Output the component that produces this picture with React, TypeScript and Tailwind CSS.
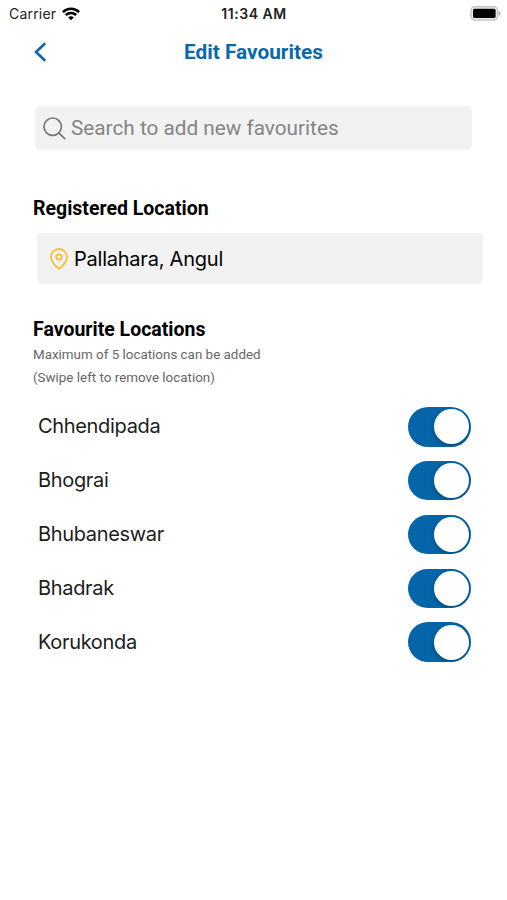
import React, { useState } from "react";

const favourites = ["Chhendipada", "Bhograi", "Bhubaneswar", "Bhadrak", "Korukonda"];

function StatusBar() {
  return (
    <div className="grid h-[27px] grid-cols-[1fr_auto_1fr] items-center pl-[9px] pr-[6px] font-['Inter',sans-serif] text-black">
      <div className="flex items-center gap-[6px]">
        <span className="text-[14px] tracking-[0.2px] text-[#222]">Carrier</span>
        <svg width="18" height="14" viewBox="0 0 18 14" fill="none" stroke="currentColor" strokeWidth="2.5">
          <path d="M0.9 5.1C5.4 0.6 12.6 0.6 17.1 5.1" />
          <path d="M3.8 8C6.7 5.2 11.3 5.2 14.2 8" />
          <path d="M6.2 10.4C7.8 8.9 10.2 8.9 11.8 10.4L9 13.2Z" fill="currentColor" stroke="none" />
        </svg>
      </div>
      <span className="-ml-[2px] text-center text-[14px] font-semibold tracking-[0.55px] text-[#222]">11:34 AM</span>
      <svg className="justify-self-end" width="31" height="15" viewBox="0 0 31 15">
        <rect x="1" y="0.8" width="26.6" height="13.2" rx="3.8" fill="#eee" stroke="#c4c4c4" strokeWidth="1.4" />
        <rect x="3" y="2.8" width="22.6" height="9.2" rx="1.5" fill="#000" />
        <path d="M28.7 5.2C31.2 5.8 31.2 9 28.7 9.6Z" fill="#aaa" />
      </svg>
    </div>
  );
}

function Toggle({ on, onClick }: { on: boolean; onClick: () => void }) {
  return (
    <button
      role="switch"
      aria-checked={on}
      onClick={onClick}
      className={`flex h-[39.5px] w-[62.5px] items-center overflow-hidden rounded-full px-[2px] ${
        on ? "justify-end bg-[#0465a8]" : "justify-start bg-gray-300"
      }`}
    >
      <span className="size-[35px] rounded-full bg-white shadow-[0_2px_5px_rgba(0,0,0,0.25)]" />
    </button>
  );
}

export default function App() {
  const [enabled, setEnabled] = useState(favourites.map(() => true));

  const toggle = (index: number) => {
    setEnabled(enabled.map((value, i) => (i === index ? !value : value)));
  };

  return (
    <div className="h-[900px] w-[507px] overflow-hidden bg-white font-['Roboto',sans-serif] text-black">
      <StatusBar />

      <header className="grid h-[49px] grid-cols-[1fr_auto_1fr] items-center px-[33px]">
        <button aria-label="Back" className="w-fit">
          <svg width="14" height="20" viewBox="0 0 14 20" fill="none" stroke="#0d68aa" strokeWidth="2.6">
            <path d="M12.2 1.2L3 10L12.2 18.8" />
          </svg>
        </button>
        <h1 className="pt-[2px] text-[20.8px] font-bold text-[#0d68aa]">Edit Favourites</h1>
      </header>

      <main>
        <label className="ml-[35px] mt-[30px] flex h-[44px] w-[437px] items-center rounded-[5px] bg-[#f2f2f2] pl-[8px]">
          <svg width="23" height="23" viewBox="0 0 23 23" fill="none" stroke="#777" strokeWidth="1.7">
            <circle cx="9.7" cy="9.7" r="8.7" />
            <path d="M15.8 15.8L22.2 22.2" />
          </svg>
          <input
            className="ml-[5px] flex-1 bg-transparent pt-[2px] text-[20.75px] outline-none placeholder:text-[#858585]"
            placeholder="Search to add new favourites"
          />
        </label>

        <h2 className="ml-[33px] mt-[45px] text-[19.5px] font-bold leading-[28px]">Registered Location</h2>
        <div className="ml-[37px] mt-[10px] flex h-[51px] w-[446px] items-center rounded-[5px] bg-[#f2f2f2] pl-[13px]">
          <svg width="18" height="22" viewBox="0 0 18 22" fill="none" stroke="#f7bd35" strokeWidth="1.8">
            <path d="M9 20.8C6 18.5 1 13.5 1 9A8 8 0 0 1 17 9C17 13.5 12 18.5 9 20.8Z" />
            <circle cx="9" cy="9" r="2.7" />
          </svg>
          <span className="ml-[6px] font-['Inter',sans-serif] text-[20px] tracking-[-0.23px]">Pallahara, Angul</span>
        </div>

        <h2 className="ml-[33px] mt-[32px] text-[19.5px] font-bold leading-[28px]">Favourite Locations</h2>
        <p className="-mt-px ml-[33px] text-[13.4px] leading-[23px] text-[#666]">
          Maximum of 5 locations can be added
          <br />
          (Swipe left to remove location)
        </p>

        <ul className="mt-[11px] pl-[38px] pr-[36.5px]">
          {favourites.map((name, i) => (
            <li key={name} className="flex h-[53.8px] items-center justify-between">
              <span className="-mt-px font-['Inter',sans-serif] text-[20px] tracking-[-0.33px] text-[#1c1c1c]">{name}</span>
              <Toggle on={enabled[i]} onClick={() => toggle(i)} />
            </li>
          ))}
        </ul>
      </main>
    </div>
  );
}
